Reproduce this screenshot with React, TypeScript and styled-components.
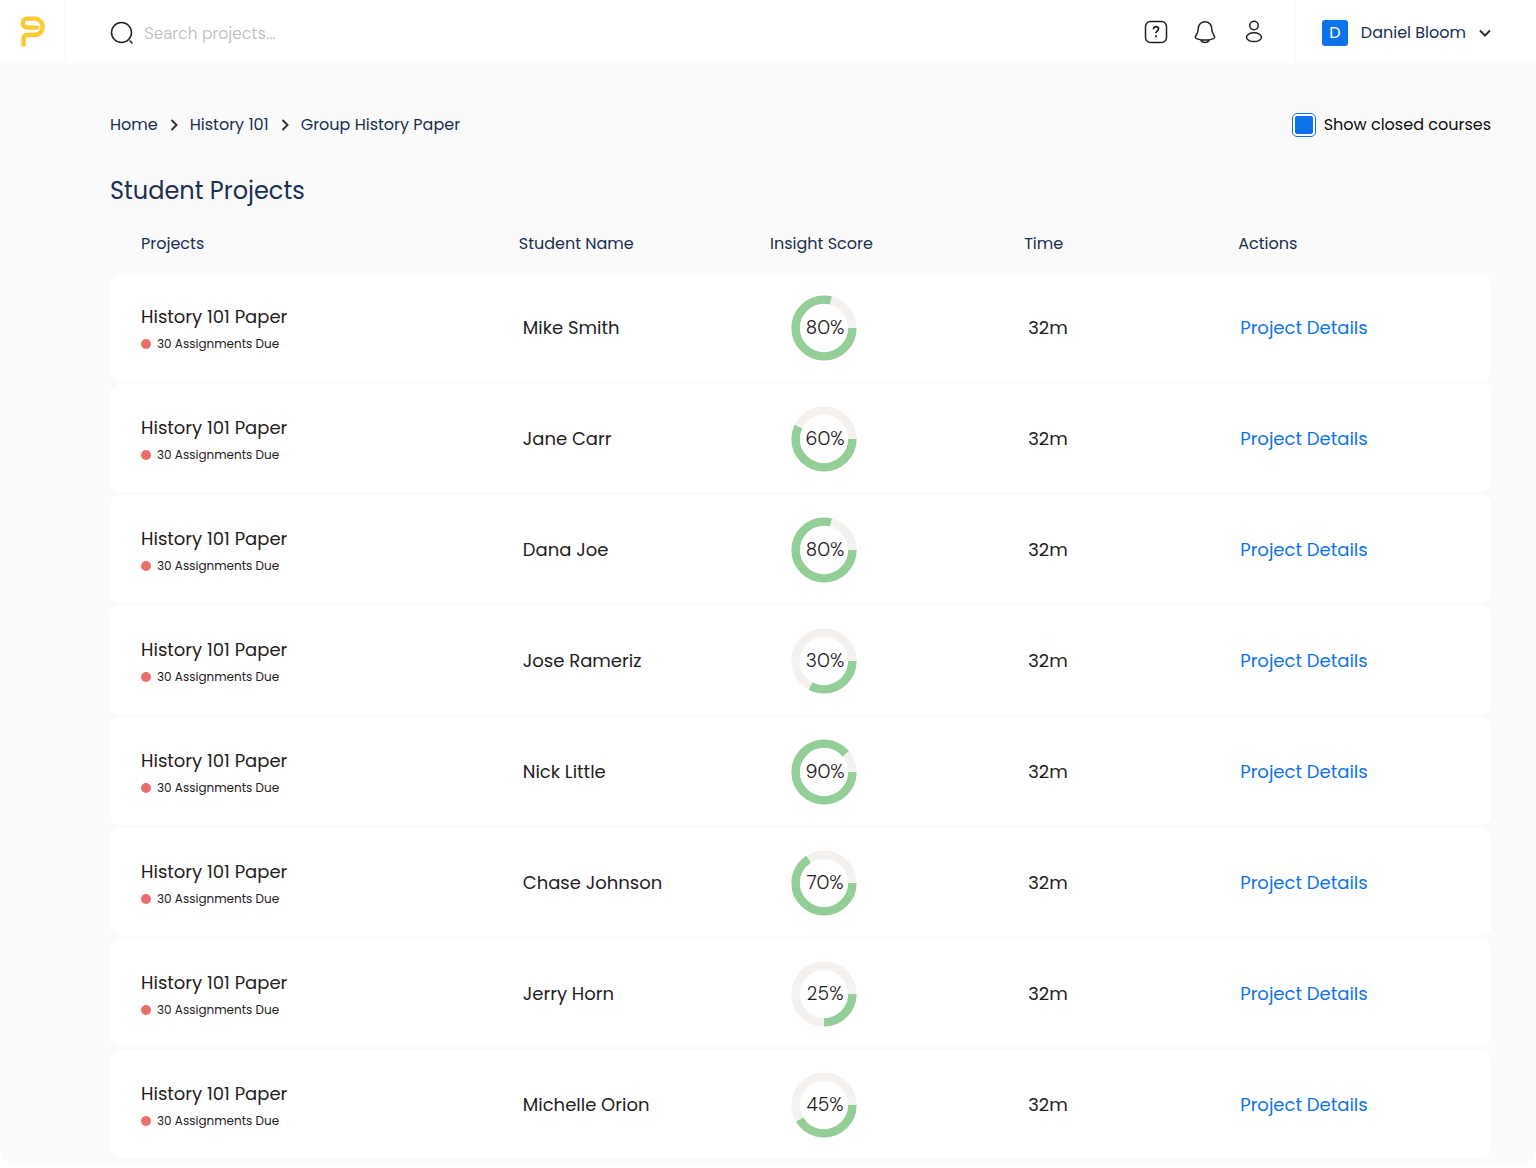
import React from "react";
import styled, { createGlobalStyle } from "styled-components";

const font = `Poppins, Inter, "Noto Sans", sans-serif`;
const altFont = `"DM Sans", Inter, "Noto Sans", sans-serif`;
const navy = "#172f52";
const ink = "#1f2022";
const blue = "#0d73ea";

const GlobalStyle = createGlobalStyle`
  *, *::before, *::after { box-sizing: border-box; }
  body { margin: 0; background: #fff; font-family: ${font}; color: ${ink}; }
  button, input { font: inherit; color: inherit; }
  svg { display: block; flex: none; }
`;

const Page = styled.div`
  background: #fafafa;
  border-radius: 0 0 20px 20px;
  overflow: hidden;
`;

const TopBar = styled.header`
  display: flex;
  height: 63px;
  background: #fff;
`;

const LogoLink = styled.a`
  display: flex;
  align-items: center;
  justify-content: center;
  width: 66px;
  border-right: 1px solid #f5f5f5;
`;

const Search = styled.label`
  display: flex;
  flex: 1;
  align-items: center;
  gap: 10px;
  padding: 2px 0 0 44px;
`;

const SearchInput = styled.input`
  flex: 1;
  min-width: 0;
  padding: 0;
  border: 0;
  outline: 0;
  background: none;
  font-family: ${altFont};
  font-size: 17px;
  font-weight: 300;
  line-height: 22px;
  &::placeholder { color: #bcbcbc; opacity: 1; }
`;

const IconNav = styled.nav`
  display: flex;
  align-items: center;
  gap: 25px;
  padding-right: 28px;
`;

const IconButton = styled.button`
  display: flex;
  padding: 0;
  border: 0;
  background: none;
  cursor: pointer;
`;

const UserMenu = styled.button`
  display: flex;
  align-items: center;
  gap: 13px;
  padding: 2px 45px 0 27px;
  border: 0;
  border-left: 1px solid #f3f4f9;
  background: none;
  color: ${navy};
  font-size: 16px;
  cursor: pointer;
`;

const Avatar = styled.span`
  display: grid;
  place-items: center;
  width: 26px;
  height: 26px;
  border-radius: 3px;
  background: ${blue};
  color: #fff;
`;

const Main = styled.main`
  padding: 48px 45px 6px 110px;
`;

const Toolbar = styled.div`
  display: flex;
  align-items: center;
  justify-content: space-between;
  height: 28px;
`;

const Crumbs = styled.nav`
  display: flex;
  align-items: center;
  gap: 11px;
`;

const Crumb = styled.a`
  color: ${navy};
  font-size: 16px;
  line-height: 24px;
  text-decoration: none;
`;

const Toggle = styled.label`
  display: flex;
  align-items: center;
  gap: 8px;
  color: #0b0b0c;
  font-size: 16px;
  line-height: 24px;
`;

const Checkbox = styled.input`
  appearance: none;
  width: 24px;
  height: 24px;
  margin: 0;
  padding: 2px;
  border: 1px solid ${blue};
  border-radius: 5px;
  background: #fff;
  &:checked { background: linear-gradient(${blue}, ${blue}) content-box, #fff; }
`;

const Title = styled.h1`
  margin: 34px 0 0;
  color: ${navy};
  font-size: 24px;
  font-weight: 400;
  line-height: 36px;
`;

const Table = styled.table`
  width: 100%;
  table-layout: fixed;
  border-collapse: separate;
  border-spacing: 0 3px;
`;

const Col = styled.col<{ $share: number }>`
  width: ${(p) => p.$share}%;
`;

const HeadCell = styled.th`
  height: 58px;
  padding: 5px 0 0;
  color: ${navy};
  font-size: 16px;
  font-weight: 400;
  text-align: left;
  &:first-child { padding-left: 31px; }
`;

const Cell = styled.td`
  height: 108px;
  padding: 2px 0 0 4px;
  background: #fff;
  font-size: 18px;
  line-height: 28px;
  &:first-child { padding: 6px 0 0 31px; border-radius: 10px 0 0 10px; }
  &:last-child { padding-left: 2px; border-radius: 0 10px 10px 0; }
`;

const Due = styled.div`
  display: flex;
  align-items: center;
  gap: 6px;
  font-size: 12px;
  line-height: 26px;
`;

const Dot = styled.span`
  width: 10px;
  height: 10px;
  border-radius: 50%;
  background: #ec6e6b;
`;

const DetailsLink = styled.a`
  color: ${blue};
  text-decoration: none;
`;

const Score = styled.div`
  display: grid;
  width: 66px;
  height: 66px;
  margin-left: 17px;
  place-items: center;
  > * { grid-area: 1 / 1; }
`;

const ScoreText = styled.span`
  padding-left: 2px;
  font-family: ${altFont};
  font-size: 19px;
  font-weight: 300;
`;

const Chevron = ({ down = false }: { down?: boolean }) => (
  <svg width={down ? 12 : 10} height={down ? 8 : 12} viewBox={down ? "0 0 12 8" : "0 0 10 12"} fill="none" stroke="#303030" strokeWidth="2" aria-hidden="true">
    <path d={down ? "M1 1.5 6 6.5 11 1.5" : "M2.5 1 7.5 6 2.5 11"} />
  </svg>
);

const Donut = ({ sweep }: { sweep: number }) => (
  <svg width="66" height="66" viewBox="0 0 66 66" fill="none" strokeWidth="8.4" aria-hidden="true">
    <circle cx="33" cy="33" r="28.4" stroke="#f4f1ef" />
    <circle cx="33" cy="33" r="28.4" stroke="#93ce97" pathLength="360" strokeDasharray={`${sweep} 360`} />
  </svg>
);

const rows = [
  { student: "Mike Smith", score: 80, sweep: 284 },
  { student: "Jane Carr", score: 60, sweep: 206 },
  { student: "Dana Joe", score: 80, sweep: 284 },
  { student: "Jose Rameriz", score: 30, sweep: 118 },
  { student: "Nick Little", score: 90, sweep: 320 },
  { student: "Chase Johnson", score: 70, sweep: 237 },
  { student: "Jerry Horn", score: 25, sweep: 90 },
  { student: "Michelle Orion", score: 45, sweep: 149 },
];

const columns = [
  { label: "Projects", share: 29.6 },
  { label: "Student Name", share: 18.2 },
  { label: "Insight Score", share: 18.4 },
  { label: "Time", share: 15.5 },
  { label: "Actions", share: 18.3 },
];

export default function App() {
  return (
    <Page>
      <GlobalStyle />
      <TopBar>
        <LogoLink href="#" aria-label="Home page">
          <svg width="26" height="32" viewBox="0 0 26 32" fill="none" stroke="#fdc92e" strokeWidth="4.4" strokeLinejoin="round" aria-hidden="true">
            <path d="M17 11.6H7.2a4.5 4.5 0 0 1 0-9h7.3a8.2 8.2 0 0 1 0 16.4H6.5a3 3 0 0 0-3 3V30.5" />
            <circle cx="17" cy="11.6" r="2.2" fill="#fdc92e" stroke="none" />
          </svg>
        </LogoLink>
        <Search>
          <svg width="24" height="24" viewBox="0 0 24 24" fill="none" stroke={ink} strokeWidth="1.5" aria-hidden="true">
            <circle cx="11.5" cy="11.5" r="10" />
            <path d="m19.5 19.5 3 3" />
          </svg>
          <SearchInput type="search" placeholder="Search projects..." aria-label="Search projects" />
        </Search>
        <IconNav aria-label="Shortcuts">
          <IconButton aria-label="Help">
            <svg width="24" height="24" viewBox="0 0 24 24" fill="none" stroke={ink} strokeWidth="1.5" aria-hidden="true">
              <rect x="1.5" y="1.5" width="21" height="21" rx="5" />
              <path strokeWidth="1.8" d="M9.5 9.3c0-1.7 1.1-2.6 2.5-2.6s2.5.9 2.5 2.3c0 1.9-2.5 2-2.5 4.2M12 15.3v1.9" />
            </svg>
          </IconButton>
          <IconButton aria-label="Notifications">
            <svg width="24" height="24" viewBox="0 0 24 24" fill="none" stroke={ink} strokeWidth="1.5" aria-hidden="true">
              <path d="M12 1.7c-4 0-6.7 3-6.7 6.7 0 3.2-.3 4.3-2.2 6.8-1.4 2-.8 3.2 1 3.7 4.900 1.500 10.900 1.500 15.800 0 1.800-.5 2.400-1.700 1-3.700-1.900-2.500-2.200-3.600-2.200-6.800 0-3.700-2.700-6.700-6.700-6.700ZM7.700 20c.7 1.700 2.300 2.500 4.300 2.500s3.600-.8 4.300-2.500" />
            </svg>
          </IconButton>
          <IconButton aria-label="Profile">
            <svg width="24" height="24" viewBox="0 0 24 24" fill="none" stroke={ink} strokeWidth="1.5" aria-hidden="true">
              <circle cx="12" cy="5.5" r="4.2" />
              <ellipse cx="12" cy="17.2" rx="7.5" ry="4.4" />
            </svg>
          </IconButton>
        </IconNav>
        <UserMenu>
          <Avatar>D</Avatar>
          Daniel Bloom
          <Chevron down />
        </UserMenu>
      </TopBar>
      <Main>
        <Toolbar>
          <Crumbs aria-label="Breadcrumb">
            <Crumb href="#">Home</Crumb>
            <Chevron />
            <Crumb href="#">History 101</Crumb>
            <Chevron />
            <Crumb href="#">Group History Paper</Crumb>
          </Crumbs>
          <Toggle>
            <Checkbox type="checkbox" defaultChecked />
            Show closed courses
          </Toggle>
        </Toolbar>
        <Title>Student Projects</Title>
        <Table>
          <colgroup>
            {columns.map((c) => (
              <Col key={c.label} $share={c.share} />
            ))}
          </colgroup>
          <thead>
            <tr>
              {columns.map((c) => (
                <HeadCell key={c.label} scope="col">{c.label}</HeadCell>
              ))}
            </tr>
          </thead>
          <tbody>
            {rows.map((r) => (
              <tr key={r.student}>
                <Cell>
                  History 101 Paper
                  <Due><Dot />30 Assignments Due</Due>
                </Cell>
                <Cell>{r.student}</Cell>
                <Cell>
                  <Score>
                    <Donut sweep={r.sweep} />
                    <ScoreText>{r.score}%</ScoreText>
                  </Score>
                </Cell>
                <Cell>32m</Cell>
                <Cell><DetailsLink href="#">Project Details</DetailsLink></Cell>
              </tr>
            ))}
          </tbody>
        </Table>
      </Main>
    </Page>
  );
}
